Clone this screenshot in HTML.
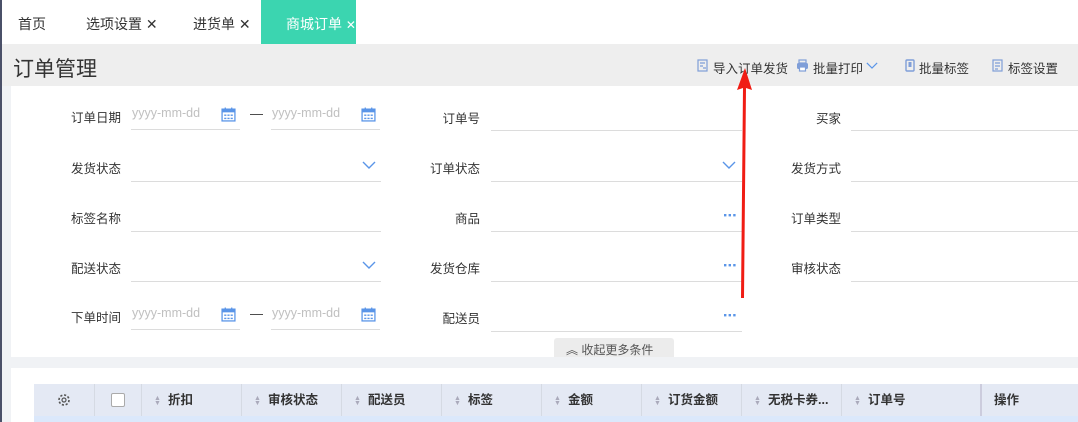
<!DOCTYPE html>
<html><head><meta charset="utf-8"><style>
*{margin:0;padding:0;box-sizing:border-box}
body{width:1078px;height:422px;overflow:hidden;background:#f0f2f5;font-family:"Liberation Sans","Noto Sans CJK SC",sans-serif;font-size:13px;color:#333;position:relative}
.a{position:absolute;white-space:nowrap}
.lbl{position:absolute;text-align:right;width:100px;font-size:12.5px;color:#333}
.ul{position:absolute;height:1px;background:#dcdcdc}
.ph{position:absolute;color:#c0c0c0;font-size:12.5px}
.th{position:absolute;top:384px;height:32px;line-height:32px;border-right:1px solid #d5dae3;font-size:12.5px;font-weight:bold;color:#333;white-space:nowrap}
.s{display:inline-block;width:8px;font-size:7px;line-height:5px;color:#aab;vertical-align:middle;margin:0 6px 0 12px}
</style></head><body>
<svg width="0" height="0" style="position:absolute"><defs>
<symbol id="cal" viewBox="0 0 14 14"><rect x="1" y="2" width="12" height="11" fill="none" stroke="#5a95e8" stroke-width="1.2"/><rect x="1" y="2" width="12" height="3" fill="#5a95e8"/><line x1="4" y1="0.5" x2="4" y2="3" stroke="#5a95e8" stroke-width="1.2"/><line x1="10" y1="0.5" x2="10" y2="3" stroke="#5a95e8" stroke-width="1.2"/><g fill="#5a95e8"><rect x="3" y="7" width="2" height="1.3"/><rect x="6" y="7" width="2" height="1.3"/><rect x="9" y="7" width="2" height="1.3"/><rect x="3" y="10" width="2" height="1.3"/><rect x="6" y="10" width="2" height="1.3"/><rect x="9" y="10" width="2" height="1.3"/></g></symbol>
<symbol id="chev" viewBox="0 0 14 8"><path d="M1 1 L7 7 L13 1" fill="none" stroke="#5a95e8" stroke-width="1.4"/></symbol>
<symbol id="dots" viewBox="0 0 12 4"><g fill="#5a95e8"><rect x="0" y="1" width="2.4" height="2.4"/><rect x="4.6" y="1" width="2.4" height="2.4"/><rect x="9.2" y="1" width="2.4" height="2.4"/></g></symbol>
</defs></svg>
<div class="a" style="left:0;top:0;width:2px;height:422px;background:#4a5068"></div>
<div class="a" style="left:2px;top:0;width:1076px;height:44px;background:#fff"></div>
<div class="a" style="left:18px;top:14px;font-size:14px">首页</div>
<div class="a" style="left:86px;top:14px;font-size:14px">选项设置 ✕</div>
<div class="a" style="left:193px;top:14px;font-size:14px">进货单 ✕</div>
<div class="a" style="left:261px;top:0;width:95px;height:44px;background:#3bd5b0;color:#fff;font-size:14px;padding:14px 0 0 25px">商城订单 <span style="font-size:12px">✕</span></div>
<div class="a" style="left:2px;top:44px;width:1076px;height:42px;background:#eeeeee"></div>
<div class="a" style="left:13px;top:53px;font-size:21px;color:#333">订单管理</div>
<svg class="a" style="left:697px;top:59px" width="12" height="13" viewBox="0 0 12 13"><rect x="1" y="1" width="9" height="11" fill="none" stroke="#7f9ed8" stroke-width="1.2"/><path d="M3 4h5M3 7h3M6 9l3 0" stroke="#7f9ed8" stroke-width="1.2"/></svg>
<div class="a" style="left:713px;top:58px;font-size:12.5px">导入订单发货</div>
<svg class="a" style="left:796px;top:59px" width="13" height="13" viewBox="0 0 13 13"><rect x="3" y="1" width="7" height="3" fill="none" stroke="#7f9ed8" stroke-width="1.2"/><rect x="1" y="4" width="11" height="6" rx="1.5" fill="#7f9ed8"/><rect x="3.5" y="8" width="6" height="4" fill="#fff" stroke="#7f9ed8" stroke-width="1.2"/></svg>
<div class="a" style="left:813px;top:58px;font-size:12.5px">批量打印</div>
<svg class="a" style="left:866px;top:62px" width="12" height="7"><use href="#chev" width="12" height="7"/></svg>
<svg class="a" style="left:905px;top:59px" width="10" height="13" viewBox="0 0 10 13"><rect x="1" y="1" width="8" height="11" rx="1" fill="none" stroke="#7f9ed8" stroke-width="1.4"/><rect x="3.5" y="3" width="3" height="5" fill="#7f9ed8"/></svg>
<div class="a" style="left:919px;top:58px;font-size:12.5px">批量标签</div>
<svg class="a" style="left:992px;top:59px" width="12" height="13" viewBox="0 0 12 13"><rect x="1" y="1" width="9" height="11" fill="none" stroke="#7f9ed8" stroke-width="1.2"/><path d="M3 4h5M3 7h5M3 10h3" stroke="#7f9ed8" stroke-width="1.2"/></svg>
<div class="a" style="left:1008px;top:58px;font-size:12.5px">标签设置</div>
<div class="a" style="left:11px;top:86px;width:1067px;height:271px;background:#fff"></div>
<!-- col1 -->
<div class="lbl" style="left:21px;top:107px">订单日期</div>
<div class="ph" style="left:132px;top:106px">yyyy-mm-dd</div><svg class="a" style="left:221px;top:107px" width="15" height="15"><use href="#cal" width="15" height="15"/></svg><div class="ul" style="left:131px;top:129px;width:109px"></div>
<div class="a" style="left:250px;top:106px">—</div>
<div class="ph" style="left:272px;top:106px">yyyy-mm-dd</div><svg class="a" style="left:361px;top:107px" width="15" height="15"><use href="#cal" width="15" height="15"/></svg><div class="ul" style="left:271px;top:129px;width:109px"></div>
<div class="lbl" style="left:21px;top:158px">发货状态</div><svg class="a" style="left:362px;top:161px" width="14" height="8"><use href="#chev" width="14" height="8"/></svg><div class="ul" style="left:131px;top:181px;width:250px"></div>
<div class="lbl" style="left:21px;top:208px">标签名称</div><div class="ul" style="left:131px;top:231px;width:250px"></div>
<div class="lbl" style="left:21px;top:258px">配送状态</div><svg class="a" style="left:362px;top:261px" width="14" height="8"><use href="#chev" width="14" height="8"/></svg><div class="ul" style="left:131px;top:281px;width:250px"></div>
<div class="lbl" style="left:21px;top:307px">下单时间</div>
<div class="ph" style="left:132px;top:306px">yyyy-mm-dd</div><svg class="a" style="left:221px;top:307px" width="15" height="15"><use href="#cal" width="15" height="15"/></svg><div class="ul" style="left:131px;top:329px;width:109px"></div>
<div class="a" style="left:250px;top:306px">—</div>
<div class="ph" style="left:272px;top:306px">yyyy-mm-dd</div><svg class="a" style="left:361px;top:307px" width="15" height="15"><use href="#cal" width="15" height="15"/></svg><div class="ul" style="left:271px;top:329px;width:109px"></div>
<!-- col2 -->
<div class="lbl" style="left:380px;top:108px">订单号</div><div class="ul" style="left:491px;top:130px;width:251px"></div>
<div class="lbl" style="left:380px;top:158px">订单状态</div><svg class="a" style="left:722px;top:161px" width="14" height="8"><use href="#chev" width="14" height="8"/></svg><div class="ul" style="left:491px;top:181px;width:251px"></div>
<div class="lbl" style="left:380px;top:208px">商品</div><svg class="a" style="left:724px;top:213px" width="12" height="4"><use href="#dots" width="12" height="4"/></svg><div class="ul" style="left:491px;top:231px;width:251px"></div>
<div class="lbl" style="left:380px;top:258px">发货仓库</div><svg class="a" style="left:724px;top:263px" width="12" height="4"><use href="#dots" width="12" height="4"/></svg><div class="ul" style="left:491px;top:281px;width:251px"></div>
<div class="lbl" style="left:380px;top:308px">配送员</div><svg class="a" style="left:724px;top:313px" width="12" height="4"><use href="#dots" width="12" height="4"/></svg><div class="ul" style="left:491px;top:331px;width:251px"></div>
<!-- col3 -->
<div class="lbl" style="left:741px;top:108px">买家</div><div class="ul" style="left:851px;top:130px;width:227px"></div>
<div class="lbl" style="left:741px;top:158px">发货方式</div><div class="ul" style="left:851px;top:181px;width:227px"></div>
<div class="lbl" style="left:741px;top:208px">订单类型</div><div class="ul" style="left:851px;top:231px;width:227px"></div>
<div class="lbl" style="left:741px;top:258px">审核状态</div><div class="ul" style="left:851px;top:281px;width:227px"></div>
<div class="a" style="left:554px;top:338px;width:120px;height:19px;background:#ececec;border-radius:3px 3px 0 0;font-size:12px;color:#555;padding:3px 0 0 12px">︽ 收起更多条件</div>
<div class="a" style="left:11px;top:368px;width:1067px;height:54px;background:#fff"></div>
<div class="a" style="left:34px;top:384px;width:1044px;height:32px;background:#e4e9f4"></div>
<div class="a" style="left:34px;top:416px;width:1044px;height:6px;background:#dbe8fb"></div>
<div class="th" style="left:34px;width:61px"><svg class="a" style="left:23px;top:9px" width="14" height="14" viewBox="0 0 14 14"><circle cx="7" cy="7" r="5" fill="none" stroke="#555" stroke-width="1.6" stroke-dasharray="2.2 1.7"/><circle cx="7" cy="7" r="2" fill="none" stroke="#555" stroke-width="1.2"/></svg></div>
<div class="th" style="left:95px;width:47px"><span class="a" style="left:16px;top:9px;width:14px;height:14px;border:1px solid #aaa;border-radius:2px;background:#fff"></span></div>
<div class="th" style="left:142px;width:100px"><span class="s">▲<br>▼</span>折扣</div>
<div class="th" style="left:242px;width:100px"><span class="s">▲<br>▼</span>审核状态</div>
<div class="th" style="left:342px;width:100px"><span class="s">▲<br>▼</span>配送员</div>
<div class="th" style="left:442px;width:100px"><span class="s">▲<br>▼</span>标签</div>
<div class="th" style="left:542px;width:100px"><span class="s">▲<br>▼</span>金额</div>
<div class="th" style="left:642px;width:100px"><span class="s">▲<br>▼</span>订货金额</div>
<div class="th" style="left:742px;width:100px"><span class="s">▲<br>▼</span>无税卡券...</div>
<div class="th" style="left:842px;width:140px;border-right:2px solid #ccd"><span class="s">▲<br>▼</span>订单号</div>
<div class="th" style="left:982px;width:96px;padding-left:12px;border:none">操作</div>
<svg class="a" style="left:0;top:0" width="1078" height="422"><polygon points="741,298 744,298 746,88 752,90 745,68 737,90 743,88" fill="#f01c14"/></svg>
</body></html>
